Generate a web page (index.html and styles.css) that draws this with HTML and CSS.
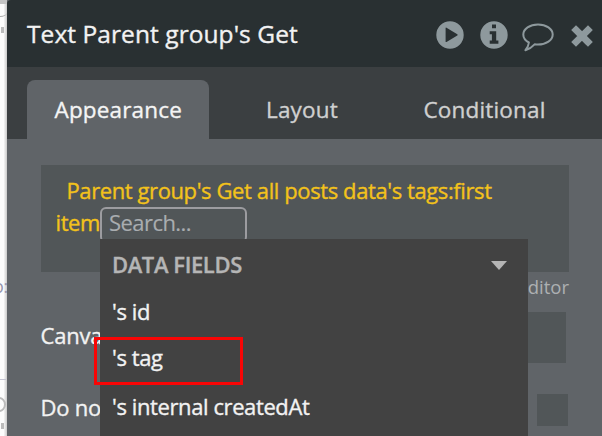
FILE: index.html
```html
<!DOCTYPE html>
<html lang="en">
<head>
<meta charset="utf-8">
<title>Property editor</title>
<link rel="stylesheet" href="styles.css">
</head>
<body>
<div class="workspace">
  <aside class="canvas-edge">
    <i class="mark mark-corner"></i>
    <i class="mark mark-curve"></i>
    <i class="mark mark-tick"></i>
    <span class="edge-text">o:</span>
    <i class="mark mark-line"></i>
    <i class="mark mark-ring"></i>
    <i class="mark mark-tick low"></i>
  </aside>
  <section class="panel">
    <header class="titlebar">
      <h1>Text Parent group's Get</h1>
      <div class="actions">
        <svg width="28" height="28" viewBox="0 0 28 28"><path fill="currentColor" fill-rule="evenodd" d="M14 0.3a13.7 13.7 0 1 0 0 27.4a13.7 13.7 0 1 0 0-27.4zM9.6 7.2Q9.6 6.3 10.5 6.8L21.3 13.2Q22.2 13.9 21.3 14.5L10.5 20.9Q9.6 21.4 9.6 20.5z"/></svg>
        <svg width="28" height="28" viewBox="0 0 28 28"><path fill="currentColor" fill-rule="evenodd" d="M14 0.3a13.7 13.7 0 1 0 0 27.4a13.7 13.7 0 1 0 0-27.4zM12 3.6H16V7.3H12zM9.7 10.2H16.2V19.6H18.4V22.7H9.7V19.6H11.9V13.3H9.7z"/></svg>
        <svg class="bubble" width="32" height="29" viewBox="0 0 32 29"><path fill="none" stroke="currentColor" stroke-width="2" stroke-linejoin="round" d="M16 1.4C24.2 1.4 30.7 5.9 30.7 11.5S24.2 21.6 16 21.6Q14.3 21.6 12.6 21.3Q8.8 25.5 3.4 27.2Q6.4 23.9 6.9 19.5Q1.3 16.5 1.3 11.5C1.3 5.9 7.8 1.4 16 1.4z"/></svg>
        <svg class="close" width="22" height="22" viewBox="0 0 22 22"><path fill="none" stroke="currentColor" stroke-width="6.8" stroke-linecap="square" stroke-linejoin="round" d="M5 5L17 17M17 5L5 17"/></svg>
      </div>
    </header>
    <nav class="tabs">
      <div class="tab active">Appearance</div>
      <div class="tab layout">Layout</div>
      <div class="tab cond">Conditional</div>
    </nav>
    <main class="body">
      <div class="composer">
        <div class="expr">Parent group's Get all posts data's tags:first</div>
        <div class="expr second"><span class="tail">item</span><span class="search">Search...</span></div>
        <div class="menu">
          <div class="group">DATA FIELDS<svg width="16" height="9" viewBox="0 0 16 9"><path fill="currentColor" d="M0 0H16L8 9z"/></svg></div>
          <div class="item">'s id</div>
          <div class="item picked">'s tag</div>
          <div class="item">'s internal createdAt</div>
        </div>
      </div>
      <div class="editor-link">editor</div>
      <div class="field">Canvas<i class="input"></i></div>
      <div class="field check">Do not<i class="box"></i></div>
    </main>
  </section>
</div>
</body>
</html>
```
FILE: styles.css
```css
*, *::after { box-sizing: border-box; }
body {
  margin: 0;
  width: 602px;
  height: 436px;
  overflow: hidden;
  background: #fafafa;
  font-family: "Open Sans", "Noto Sans", sans-serif;
  font-size: 22px;
  letter-spacing: -0.4px;
  color: #f2f2f2;
  -webkit-text-stroke: 0.35px currentColor;
}
.workspace { display: flex; height: 436px; }
.canvas-edge {
  position: relative;
  flex: 0 0 6.5px;
  overflow: hidden;
  background: linear-gradient(90deg, #fcfcfc 50%, #c9c9c9);
}
.mark { position: absolute; left: 0; }
.mark-corner { top: 0; width: 7px; height: 4px; background: #c4c4c4; }
.mark-curve { top: 9px; left: -7px; width: 14px; height: 8px; border-bottom: 1px solid #aaa; border-radius: 50%; }
.mark-tick { top: 27px; left: 1px; width: 3px; height: 6px; background: #bbb; }
.mark-tick.low { top: 423px; }
.mark-line { top: 379px; width: 6px; height: 1px; background: #c5c5d2; }
.mark-ring { top: 397px; left: -8px; width: 14px; height: 15px; border: 2px solid #bbb; border-radius: 50%; }
.edge-text { position: absolute; top: 274px; left: -7px; font-size: 18px; color: #9797ad; line-height: 24px; -webkit-text-stroke: 0; }

.panel { flex: 1; display: flex; flex-direction: column; background: #606468; }
.titlebar {
  flex: 0 0 66.5px;
  display: flex;
  justify-content: space-between;
  padding: 0 9px 0 20.5px;
  border-radius: 4px 0 0 0;
  background: #293032;
}
h1 { margin: 0; font-size: 24.5px; font-weight: 400; line-height: 67px; letter-spacing: 0.07px; white-space: nowrap; }
.actions { display: flex; align-items: flex-start; padding-top: 21px; color: #8e999d; }
.actions svg { margin-right: 16px; }
.actions .bubble { margin: 2px 17px 0 -2px; }
.actions .close { margin: 4px 0 0; }

.tabs {
  flex: 0 0 71.5px;
  display: flex;
  align-items: flex-end;
  padding-left: 20px;
  background: #3b3f41;
  font-size: 22.5px;
  line-height: 60px;
  letter-spacing: 0.17px;
  color: #d0d0d0;
}
.tab { height: 59px; }
.active { width: 182.5px; padding-left: 28px; border-radius: 8px 8px 0 0; background: #606468; color: #f4f4f4; }
.layout { width: 158.5px; padding-left: 57px; }
.cond { padding-left: 56px; }

.body { flex: 1; padding: 26.5px 33px 0 34px; }
.composer { position: relative; height: 106.5px; padding: 8.5px 0 0 15px; background: #515658; color: #f3c21b; }
.expr { height: 33px; line-height: 32px; padding-left: 11px; white-space: nowrap; }
.expr.second { display: flex; padding-left: 0; line-height: 31px; }
.tail { width: 44.5px; }
.search { width: 147px; height: 36px; padding-left: 7px; border: 2px solid #9c9ca0; border-radius: 6px; line-height: 27px; letter-spacing: -0.55px; color: #a9adb0; -webkit-text-stroke: 0.15px currentColor; }
.menu { position: absolute; top: 73.5px; left: 59.5px; width: 428px; height: 210px; background: #424242; color: #f2f2f2; white-space: nowrap; }
.group { display: flex; justify-content: space-between; align-items: center; height: 50px; padding: 0 21px 0 12px; font-weight: 600; color: #b5b5b5; }
.group svg { margin-top: 4px; }
.item { height: 47.5px; line-height: 44px; padding-left: 12px; }
.picked { position: relative; line-height: 42px; }
.picked::after { content: ""; position: absolute; top: 0.5px; left: -6.5px; width: 149px; height: 48px; border: 3px solid #f80505; }
.editor-link { height: 40px; text-align: right; font-size: 18.5px; line-height: 29px; letter-spacing: 0; color: #adb0b2; -webkit-text-stroke: 0; }
.field { display: flex; justify-content: space-between; align-items: center; height: 51.5px; padding-right: 3px; line-height: 26px; padding-bottom: 4px; letter-spacing: -0.2px; }
.input { width: 200px; height: 51.5px; margin-bottom: -4px; background: #515658; }
.check { margin-top: 30.5px; height: 32px; padding: 0 1px 6px 0; }
.box { width: 31.5px; height: 32px; margin-bottom: -6px; background: #515658; }
```
